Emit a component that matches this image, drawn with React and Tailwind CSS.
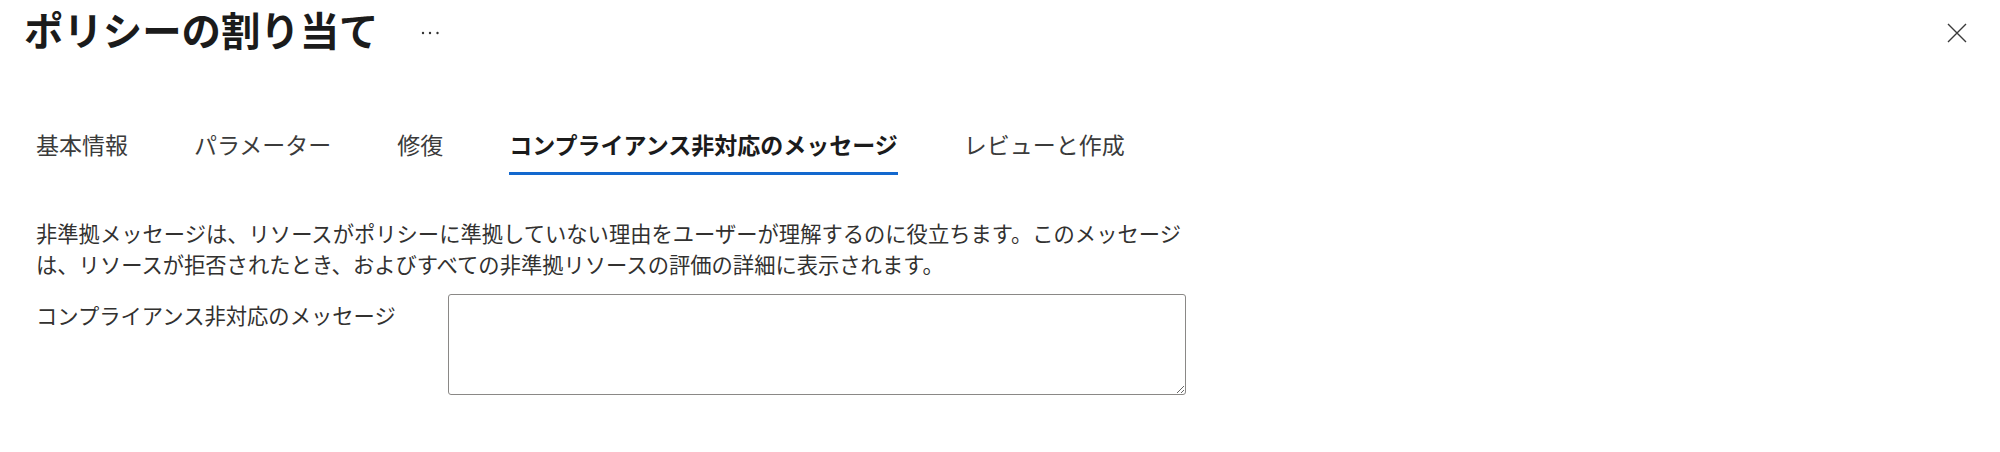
const tabs = [
  { label: "基本情報" },
  { label: "パラメーター" },
  { label: "修復" },
  { label: "コンプライアンス非対応のメッセージ", active: true },
  { label: "レビューと作成" },
];

function Tab({ label, active }) {
  return (
    <div
      className={
        active
          ? "border-b-[3px] border-[#1368ce] pb-[13px] font-semibold text-[#1b1b1b]"
          : "border-b-[3px] border-transparent pb-[13px] text-[#3b3b3b]"
      }
    >
      <span className="block text-[23px] leading-[30px]">{label}</span>
    </div>
  );
}

export default function App() {
  return (
    <div
      className="h-[452px] w-[2000px] bg-white"
      style={{ fontFamily: '"Noto Sans CJK JP", "Noto Sans", sans-serif' }}
    >
      <div className="flex h-[66px] items-center justify-between pl-[24px] pr-[33px]">
        <div className="flex items-center">
          <h1 className="pb-[8px] text-[39.4px] font-bold leading-none text-[#1b1b1b]">
            ポリシーの割り当て
          </h1>
          <button className="ml-[40px] flex h-[20px] w-[22px] items-center justify-center">
            <svg width="20" height="4" viewBox="0 0 20 4">
              <circle cx="3" cy="2" r="1.2" fill="#333" />
              <circle cx="10" cy="2" r="1.2" fill="#333" />
              <circle cx="17.5" cy="2" r="1.2" fill="#333" />
            </svg>
          </button>
        </div>
        <button className="flex h-[20px] w-[20px] items-center justify-center">
          <svg width="20" height="20" viewBox="0 0 20 20">
            <path d="M1 1L19 19M19 1L1 19" stroke="#3a3a3a" strokeWidth="1.4" fill="none" />
          </svg>
        </button>
      </div>

      <div className="mt-[63px] flex gap-[66px] pl-[36px]">
        {tabs.map((t) => (
          <Tab key={t.label} label={t.label} active={t.active} />
        ))}
      </div>

      <div className="pl-[36px]">
        <p className="mt-[42px] w-[1162px] text-[21.3px] leading-[31px] text-[#323130]">
          非準拠メッセージは、リソースがポリシーに準拠していない理由をユーザーが理解するのに役立ちます。このメッセージは、リソースが拒否されたとき、およびすべての非準拠リソースの評価の詳細に表示されます。
        </p>

        <div className="mt-[15px] flex items-start">
          <label className="w-[412px] pt-[5px] text-[21.3px] leading-[31px] text-[#323130]">
            コンプライアンス非対応のメッセージ
          </label>
          <textarea className="h-[101px] w-[738px] rounded-[3px] border border-[#8a8886] bg-white px-2 py-1 text-[21px] outline-none" />
        </div>
      </div>
    </div>
  );
}
